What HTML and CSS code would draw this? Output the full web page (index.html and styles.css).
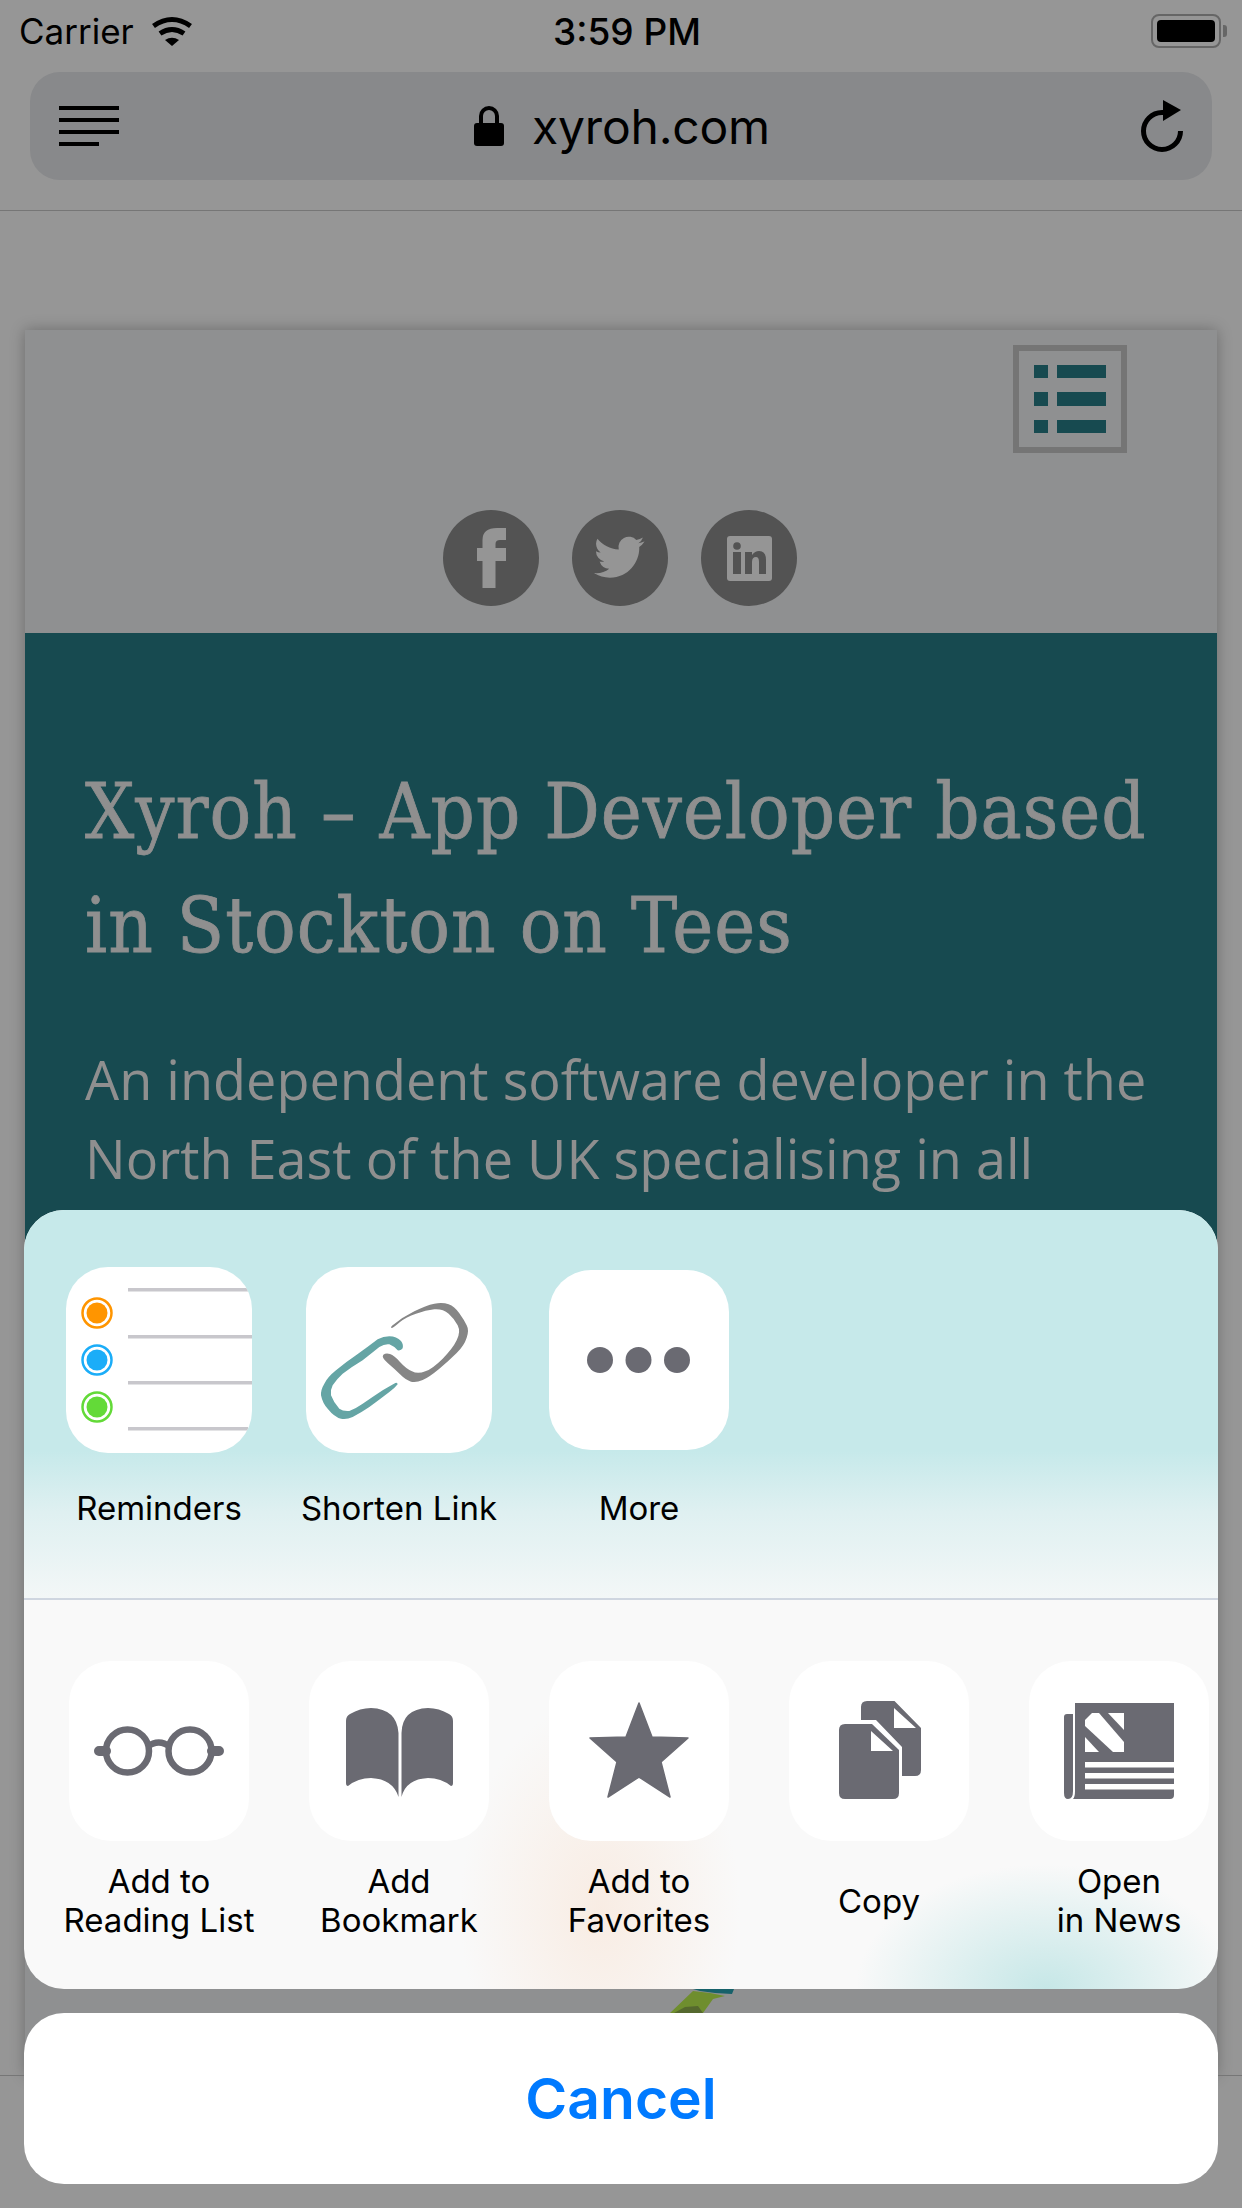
FILE: index.html
```html
<!DOCTYPE html>
<html lang="en">

<head>
    <meta charset="UTF-8" />
    <meta name="viewport" content="width=device-width, initial-scale=1.0">
    <title>Share sheet</title>
    <link rel="stylesheet" href="styles.css">
</head>

<body>
    <div class="phone">
        <header class="browser-bar">
            <div class="status-bar">
                <div class="carrier">
                    <span>Carrier</span>
                    <svg class="wifi" viewBox="0 0 42 30">
                        <path d="M14 24 Q21 19.500 28 24 L21 30 Z" fill="#000" />
                        <path d="M9 17.500 Q21 9.500 33 17.500" class="wifi-arc" />
                        <path d="M2.500 10 Q21 -3 39.500 10" class="wifi-arc" />
                    </svg>
                </div>
                <div class="clock">3:59 PM</div>
                <div class="battery">
                    <div class="battery-body"><div class="battery-level"></div></div>
                    <div class="battery-cap"></div>
                </div>
            </div>
            <div class="address-bar">
                <div class="reader-icon">
                    <i></i><i></i><i></i><i class="short"></i>
                </div>
                <div class="address">
                    <svg class="lock" viewBox="0 0 30 40">
                        <path d="M7 20 V10 A8 8 0 0 1 23 10 V20" fill="none" stroke="#000" stroke-width="4" />
                        <rect x="0" y="17" width="30" height="23" rx="3" fill="#000" />
                    </svg>
                    <span>xyroh.com</span>
                </div>
                <svg class="reload" viewBox="0 0 44 52">
                    <path d="M39.500 31 A18.500 18.500 0 1 1 21 12.500 H24" fill="none" stroke="#000" stroke-width="5" />
                    <path d="M22 0 L40 10 L22 21 Z" fill="#000" />
                </svg>
            </div>
        </header>

        <div class="page-card">
            <div class="site-top">
                <div class="menu-button">
                    <div class="menu-line"><i></i><b></b></div>
                    <div class="menu-line"><i></i><b></b></div>
                    <div class="menu-line"><i></i><b></b></div>
                </div>
                <div class="socials">
                    <svg viewBox="0 0 96 96">
                        <circle cx="48" cy="48" r="48" fill="#535353" />
                        <path d="M39.500 78 V51 H34 V38 H39.500 V30 Q39.500 18 54 18 H63 V30 H57 Q52.500 30 52.500 34 V38 H63 V51 H52.500 V78 Z" fill="#959595" />
                    </svg>
                    <svg viewBox="0 0 96 96">
                        <circle cx="48" cy="48" r="48" fill="#535353" />
                        <g transform="translate(22 22) scale(2.1)">
                            <path d="M23.953 4.57a10 10 0 01-2.825.775 4.958 4.958 0 002.163-2.723c-.951.555-2.005.959-3.127 1.184a4.92 4.92 0 00-8.384 4.482C7.69 8.095 4.067 6.13 1.64 3.162a4.822 4.822 0 00-.666 2.475c0 1.71.87 3.213 2.188 4.096a4.904 4.904 0 01-2.228-.616v.06a4.923 4.923 0 003.946 4.827 4.996 4.996 0 01-2.212.085 4.936 4.936 0 004.604 3.417 9.867 9.867 0 01-6.102 2.105c-.39 0-.779-.023-1.17-.067a13.995 13.995 0 007.557 2.209c9.053 0 13.998-7.496 13.998-13.985 0-.21 0-.42-.015-.63A9.935 9.935 0 0024 4.59z" fill="#959595" />
                        </g>
                    </svg>
                    <svg viewBox="0 0 96 96">
                        <circle cx="48" cy="48" r="48" fill="#535353" />
                        <rect x="26" y="26" width="45" height="45" rx="3" fill="#959595" />
                        <circle cx="36" cy="36" r="3.800" fill="#535353" />
                        <rect x="32" y="42" width="8" height="22" fill="#535353" />
                        <path d="M44 42 H51 V45 Q54 41 58 41 Q65 41 65 50 V64 H58 V52 Q58 47 55 47 Q51 47 51 52 V64 H44 Z" fill="#535353" />
                    </svg>
                </div>
            </div>
            <section class="hero">
                <h1>Xyroh – App Developer based<br>in Stockton on Tees</h1>
                <p>An independent software developer in the<br>North East of the UK specialising in all</p>
            </section>
            <div class="site-lower">
                <svg class="plant" viewBox="0 0 90 24">
                    <path d="M33 2 L50 4 L65 7 L53 10 L43 24 H10 Z" fill="#6f8e2e" />
                    <path d="M14 24 L25 18 L38 17 L43 24 Z" fill="#55682e" />
                    <path d="M33 0 H74 L72 5 L55 4 L40 2 Z" fill="#17616a" />
                </svg>
            </div>
        </div>
        <div class="toolbar"></div>

        <div class="share-overlay">
            <div class="sheet">
                <div class="app-row">
                    <div class="share-item">
                        <div class="tile-box">
                            <div class="tile tile-large">
                                <svg viewBox="0 0 186 186">
                                    <g fill="#c8c7cc">
                                        <rect x="62" y="21" width="120" height="3.500" />
                                        <rect x="62" y="68" width="124" height="3.500" />
                                        <rect x="62" y="114" width="124" height="3.500" />
                                        <rect x="62" y="160" width="120" height="3.500" />
                                    </g>
                                    <g fill="#fff" stroke-width="2.500">
                                        <circle cx="31" cy="46" r="14.500" stroke="#ff9500" />
                                        <circle cx="31" cy="93" r="14.500" stroke="#1badf8" />
                                        <circle cx="31" cy="140" r="14.500" stroke="#63da38" />
                                    </g>
                                    <circle cx="31" cy="46" r="10.500" fill="#ff9500" />
                                    <circle cx="31" cy="93" r="10.500" fill="#1badf8" />
                                    <circle cx="31" cy="140" r="10.500" fill="#63da38" />
                                </svg>
                            </div>
                        </div>
                        <div class="share-label">Reminders</div>
                    </div>
                    <div class="share-item">
                        <div class="tile-box">
                            <div class="tile tile-large">
                                <svg viewBox="0 0 558 558">
                                    <path d="M258 176 Q290 150 325 133 Q360 115 385 110 Q410 105 428 112 Q445 118 460 139 Q475 160 482 175 Q490 190 482 212 Q475 235 452 258 Q430 280 400 305 Q370 330 350 339 Q330 348 315 344 Q300 340 282 322 Q265 305 245 288 Q225 270 232 263 Q240 257 252 261 Q265 265 282 285 Q300 305 318 313 Q335 322 358 313 Q380 305 410 275 Q440 245 452 220 Q465 195 455 175 Q445 155 428 140 Q410 125 385 127 Q360 130 330 140 Q300 150 282 165 Q265 180 258 183 Q252 182 258 176 Z" fill="#868686" />
                                    <path d="M290 244 Q293 232 285 222 Q272 208 250 208 Q232 208 215 217 Q185 240 150 265 Q120 285 90 310 Q65 330 55 350 Q44 368 45 385 Q50 410 65 425 Q85 450 105 455 Q122 458 140 450 Q165 437 190 420 Q220 398 250 375 Q265 365 275 352 Q274 345 268 348 Q250 358 230 370 Q200 390 170 410 Q150 424 130 432 Q112 434 100 425 Q82 405 75 385 Q72 370 80 355 Q92 336 110 320 Q140 298 170 280 Q195 260 220 240 Q236 230 250 232 Q265 238 275 250 Q285 252 290 244 Z" fill="#65a5a5" />
                                </svg>
                            </div>
                        </div>
                        <div class="share-label">Shorten Link</div>
                    </div>
                    <div class="share-item">
                        <div class="tile-box">
                            <div class="tile">
                                <svg viewBox="0 0 180 180">
                                    <g fill="#6a6a72">
                                        <circle cx="51" cy="90" r="13" />
                                        <circle cx="89.500" cy="90" r="13" />
                                        <circle cx="128" cy="90" r="13" />
                                    </g>
                                </svg>
                            </div>
                        </div>
                        <div class="share-label">More</div>
                    </div>
                </div>
                <div class="action-row">
                    <div class="share-item">
                        <div class="tile">
                            <svg viewBox="0 0 180 180">
                                <g fill="none" stroke="#6a6a72" stroke-width="6.500">
                                    <circle cx="58.500" cy="90" r="21.500" />
                                    <circle cx="121" cy="90" r="21.500" />
                                    <path d="M78 86 Q90 77 101 86" />
                                    <path d="M30 90 H37 M143 90 H150" stroke-width="10" stroke-linecap="round" />
                                </g>
                            </svg>
                        </div>
                        <div class="share-label">Add to<br>Reading List</div>
                    </div>
                    <div class="share-item">
                        <div class="tile">
                            <svg viewBox="0 0 180 180">
                                <g fill="#6a6a72">
                                    <path d="M37 60 Q37 55 41 53 Q51 47 62 47 Q88 48 89.500 72 V136 Q84 118 62 117 Q49 117 39 125 Q37 125 37 122 Z" />
                                    <path d="M144 60 Q144 55 140 53 Q130 47 119 47 Q93 48 92.500 72 V136 Q97 118 119 117 Q132 117 142 125 Q144 125 144 122 Z" />
                                </g>
                            </svg>
                        </div>
                        <div class="share-label">Add<br>Bookmark</div>
                    </div>
                    <div class="share-item">
                        <div class="tile">
                            <svg viewBox="0 0 180 180">
                                <path d="M90 42 L103 76 L139 77 L112 101 L121 136 L90 116 L59 136 L68 101 L41 77 L77 76 Z" fill="#6a6a72" stroke="#6a6a72" stroke-width="1.500" stroke-linejoin="round" />
                            </svg>
                        </div>
                        <div class="share-label">Add to<br>Favorites</div>
                    </div>
                    <div class="share-item">
                        <div class="tile">
                            <svg viewBox="0 0 180 180">
                                <g fill="#6a6a72">
                                    <path d="M72 59 V46 Q72 40 78 40 H105.500 L132 67 V109 Q132 115 126 115 H113 V86 L87 59 Z" />
                                    <path d="M50 69 Q50 63 56 63 H83 L110 89 V132 Q110 138 104 138 H56 Q50 138 50 132 Z" />
                                </g>
                                <path d="M105 47 V67 H127 Z M82 70 V90 H104 Z" fill="#fff" />
                            </svg>
                        </div>
                        <div class="share-label">Copy</div>
                    </div>
                    <div class="share-item">
                        <div class="tile">
                            <svg viewBox="0 0 180 180">
                                <path d="M46 42 H145 V134 Q145 138 141 138 H44 Q46 136 46 130 Z" fill="#6a6a72" />
                                <path d="M35 56 Q35 53 38 53 H44 V130 Q44 138 39 138 Q35 138 35 132 Z" fill="#6a6a72" />
                                <g fill="#fff">
                                    <path d="M56 59 L63 52 H70 L95 81 V91 H84 L56 65 Z" />
                                    <path d="M79 52 H95 V69 Z" />
                                    <path d="M56 76 L70 91 H56 Z" />
                                    <rect x="56" y="101" width="89" height="5.500" />
                                    <rect x="56" y="112" width="89" height="5.500" />
                                    <rect x="56" y="123" width="89" height="5.500" />
                                </g>
                            </svg>
                        </div>
                        <div class="share-label">Open<br>in News</div>
                    </div>
                </div>
            </div>
            <div class="cancel-button">Cancel</div>
        </div>
    </div>
</body>

</html>
```

FILE: styles.css
```css
body {
    margin: 0;
    font-family: "Inter", "Liberation Sans", sans-serif;
    color: #000;
}

.phone {
    position: relative;
    width: 1242px;
    height: 2208px;
    overflow: hidden;
    background: #969696;
}

svg {
    display: block;
}

/* browser chrome */
.browser-bar {
    height: 210px;
    border-bottom: 1px solid #767676;
}

.status-bar {
    display: grid;
    grid-template-columns: 1fr auto 1fr;
    align-items: center;
    height: 62px;
    padding: 0 15px 0 19px;
    font-size: 35px;
}

.carrier {
    display: flex;
    align-items: center;
    gap: 17px;
}

.wifi {
    width: 42px;
    height: 30px;
    overflow: visible;
}

.wifi-arc {
    fill: none;
    stroke: #000;
    stroke-width: 5;
}

.clock {
    margin-left: 8px;
    font-size: 37px;
    font-weight: 500;
}

.battery {
    display: flex;
    align-items: center;
    justify-content: flex-end;
}

.battery-body {
    box-sizing: border-box;
    width: 70px;
    height: 34px;
    padding: 4px;
    border: 2px solid #666;
    border-radius: 8px;
}

.battery-level {
    height: 100%;
    background: #000;
    border-radius: 4px;
}

.battery-cap {
    width: 4px;
    height: 12px;
    margin-left: 2px;
    background: #666;
    border-radius: 0 3px 3px 0;
}

.address-bar {
    display: grid;
    grid-template-columns: 1fr auto 1fr;
    align-items: center;
    height: 108px;
    margin: 10px 30px 0;
    padding: 0 27px 0 29px;
    background: #88898b;
    border-radius: 30px;
}

.reader-icon {
    display: flex;
    flex-direction: column;
    gap: 8px;
    width: 60px;
}

.reader-icon i {
    display: block;
    height: 4px;
    background: #000;
}

.reader-icon .short {
    width: 40px;
}

.address {
    display: flex;
    align-items: center;
    gap: 28px;
    font-size: 48px;
    letter-spacing: -0.2px;
}

.lock {
    width: 30px;
    height: 40px;
}

.reload {
    justify-self: end;
    width: 44px;
    height: 52px;
}

/* website behind the sheet */
.page-card {
    display: flex;
    flex-direction: column;
    height: 1745px;
    margin: 119px 25px 0;
    background: #8f9091;
    box-shadow: 0 0 14px rgba(0, 0, 0, 0.28);
}

.site-top {
    box-sizing: border-box;
    display: flex;
    flex-direction: column;
    height: 303px;
    padding: 15px 90px 0 0;
}

.menu-button {
    box-sizing: border-box;
    display: flex;
    flex-direction: column;
    gap: 14px;
    align-self: flex-end;
    width: 114px;
    height: 108px;
    padding: 14px 15px;
    border: 6px solid #757575;
}

.menu-line {
    display: flex;
    gap: 9px;
    height: 13.500px;
}

.menu-line i {
    width: 13.500px;
    background: #174a50;
}

.menu-line b {
    flex: 1;
    background: #174a50;
}

.socials {
    display: flex;
    gap: 33px;
    margin: 57px 0 0 418px;
}

.socials svg {
    width: 96px;
    height: 96px;
}

.hero {
    height: 870px;
    padding: 0 60px;
    background: #174a50;
    color: #8f8f8f;
    white-space: nowrap;
}

.hero h1 {
    margin: 0;
    padding-top: 122px;
    font-family: "DejaVu Serif", "Liberation Serif", serif;
    font-stretch: condensed;
    font-size: 77px;
    font-weight: 400;
    letter-spacing: 1px;
    line-height: 114px;
    -webkit-text-stroke: 0.8px #8f8f8f;
}

.hero p {
    margin: 57px 0 0;
    font-family: "Open Sans", "Liberation Sans", sans-serif;
    font-size: 54px;
    font-weight: 400;
    line-height: 79px;
}

.site-lower {
    flex: 1;
    padding: 486px 0 0 635px;
}

.plant {
    width: 90px;
    height: 24px;
}

.toolbar {
    height: 132px;
    border-top: 1px solid #767676;
}

/* share sheet */
.share-overlay {
    position: absolute;
    left: 24px;
    right: 24px;
    bottom: 24px;
    display: flex;
    flex-direction: column;
    gap: 24px;
}

.sheet {
    overflow: hidden;
    background: #f9f9f9;
    border-radius: 40px;
}

.app-row,
.action-row {
    box-sizing: border-box;
    display: flex;
    padding-left: 15px;
}

.app-row {
    height: 390px;
    padding-top: 57px;
    background: linear-gradient(180deg, #c6e9ea 0%, #c6e9ea 62%, #dff0f1 78%, #f3f7f7 100%);
    border-bottom: 2px solid #cfd6e0;
}

.action-row {
    height: 389px;
    padding-top: 61px;
    background:
        radial-gradient(ellipse 190px 125px at 1022px 389px, rgba(195, 230, 230, 0.95), rgba(195, 230, 230, 0) 100%),
        radial-gradient(ellipse 140px 210px at 576px 310px, rgba(248, 232, 220, 0.75), rgba(248, 232, 220, 0) 100%);
}

.share-item {
    flex: none;
    display: flex;
    flex-direction: column;
    align-items: center;
    width: 240px;
}

.tile-box {
    display: flex;
    align-items: center;
    height: 186px;
}

.tile {
    width: 180px;
    height: 180px;
    overflow: hidden;
    background: #fff;
    border-radius: 42px;
}

.tile-large {
    width: 186px;
    height: 186px;
}

.share-label {
    display: flex;
    align-items: center;
    min-height: 78px;
    margin-top: 21px;
    font-size: 33px;
    line-height: 39px;
    text-align: center;
}

.app-row .share-label {
    min-height: 39px;
    margin-top: 36px;
}

.cancel-button {
    height: 171px;
    background: #fff;
    border-radius: 40px;
    color: #007aff;
    font-size: 57px;
    font-weight: 600;
    line-height: 171px;
    text-align: center;
}
```
